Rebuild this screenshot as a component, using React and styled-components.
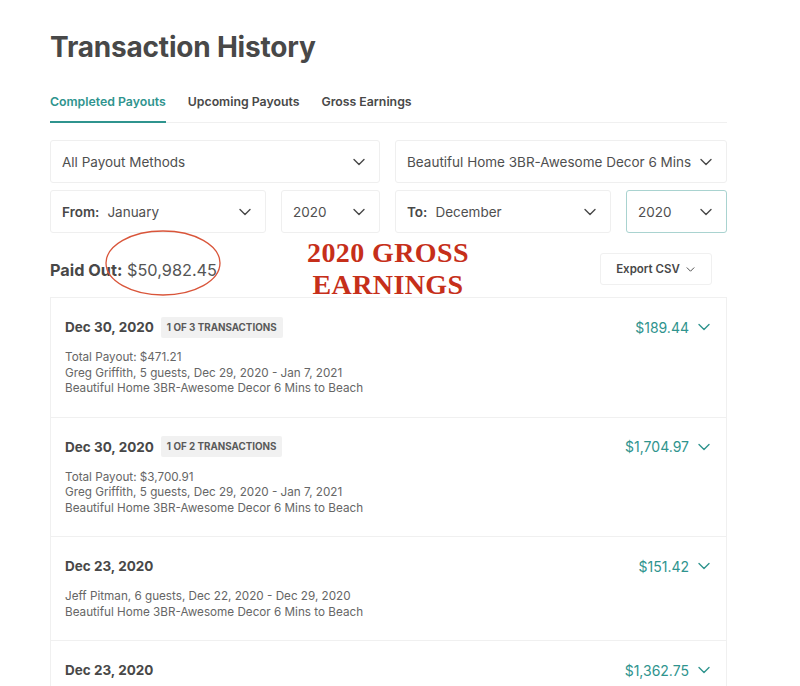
import React from 'react'
import styled, { createGlobalStyle } from 'styled-components'

const GlobalStyle = createGlobalStyle`
    body {
        margin: 0;
        background: #ffffff;
        font-family: "Inter", "Open Sans", sans-serif;
        color: #484848;
    }
`;

const TEAL = '#2f948e';

const Page = styled.div`
    width: 677px;
    padding: 27px 0 0 50px;
    position: relative;
`;

const Title = styled.h1`
    font-size: 28px;
    font-weight: 700;
    letter-spacing: -0.2px;
    color: #484848;
    margin: 0 0 27px 0;
    line-height: 40px;
`;

const Tabs = styled.div`
    display: flex;
    gap: 22px;
    border-bottom: 1px solid #f0f0f0;
    margin-bottom: 17px;
`;

const Tab = styled.div`
    font-size: 12.3px;
    font-weight: 600;
    color: ${({ $active }) => ($active ? TEAL : '#484848')};
    padding: 0 0 12px 0;
    border-bottom: 2px solid ${({ $active }) => ($active ? TEAL : 'transparent')};
    margin-bottom: -1px;
`;

const FilterGrid = styled.div`
    display: grid;
    grid-template-columns: 216px 99px 216px 101px;
    column-gap: 15px;
    row-gap: 7px;
`;

const Select = styled.div`
    grid-column: span ${({ $span }) => $span || 1};
    height: 43px;
    box-sizing: border-box;
    border: 1px solid ${({ $focused }) => ($focused ? '#a9d3d0' : '#efefef')};
    border-radius: 3px;
    display: flex;
    align-items: center;
    padding: 0 12px 0 11px;
    font-size: 13.5px;
    color: #4f4f4f;
    white-space: nowrap;
    overflow: hidden;
`;

const SelectText = styled.span`
    flex: 1;
    min-width: 0;
    overflow: hidden;
`;

const Label = styled.span`
    font-weight: 600;
    color: #484848;
    margin-right: 8px;
`;

const Chevron = ({ size = 16, color = '#484848' }) => (
    <svg width={size} height={size} viewBox="0 0 16 16" fill="none" style={{ flexShrink: 0 }}>
        <path d="M3 5.5 L8 10.5 L13 5.5" stroke={color} strokeWidth="1.4" strokeLinecap="round" strokeLinejoin="round" />
    </svg>
);

const SummaryRow = styled.div`
    display: flex;
    align-items: center;
    justify-content: space-between;
    height: 64px;
    padding-right: 15px;
`;

const PaidOut = styled.div`
    font-size: 16.3px;
    color: #555555;
    padding-top: 9px;

    b {
        font-weight: 700;
        color: #484848;
    }
`;

const ExportButton = styled.div`
    width: 112px;
    height: 32px;
    box-sizing: border-box;
    border: 1px solid #f0f0f0;
    border-radius: 3px;
    display: flex;
    align-items: center;
    justify-content: center;
    gap: 5px;
    font-size: 11.5px;
    font-weight: 600;
    color: #484848;
    margin-top: 8px;
`;

const Annotation = styled.div`
    position: absolute;
    left: 288px;
    top: 237px;
    width: 200px;
    text-align: center;
    font-family: "Liberation Serif", serif;
    font-weight: 700;
    font-size: 28px;
    line-height: 32px;
    color: #c62f1a;
    letter-spacing: 0.4px;
`;

const Circle = styled.svg`
    position: absolute;
    left: 103px;
    top: 228px;
`;

const List = styled.div`
    border: 1px solid #f0f0f0;
    border-bottom: none;
`;

const Row = styled.div`
    display: flex;
    justify-content: space-between;
    align-items: flex-start;
    padding: 19px 14px 20px 14px;
    border-bottom: 1px solid #f0f0f0;
`;

const RowMain = styled.div`
    display: flex;
    flex-direction: column;
`;

const DateLine = styled.div`
    display: flex;
    align-items: center;
    gap: 7px;
    font-size: 13.5px;
    font-weight: 700;
    color: #484848;
    height: 20px;
    margin-bottom: 13px;
`;

const Badge = styled.span`
    background: #f1f1f1;
    color: #5a5a5a;
    font-size: 9.8px;
    font-weight: 700;
    padding: 5px 6px;
    border-radius: 2px;
`;

const Detail = styled.div`
    font-size: 11.7px;
    line-height: 15.5px;
    color: #666666;
`;

const Amount = styled.div`
    display: flex;
    align-items: center;
    gap: 7px;
    font-size: 14px;
    color: ${TEAL};
    height: 20px;
`;

const rows = [
    {
        date: 'Dec 30, 2020',
        badge: '1 OF 3 TRANSACTIONS',
        amount: '$189.44',
        lines: [
            'Total Payout: $471.21',
            'Greg Griffith, 5 guests, Dec 29, 2020 - Jan 7, 2021',
            'Beautiful Home 3BR-Awesome Decor 6 Mins to Beach',
        ],
    },
    {
        date: 'Dec 30, 2020',
        badge: '1 OF 2 TRANSACTIONS',
        amount: '$1,704.97',
        lines: [
            'Total Payout: $3,700.91',
            'Greg Griffith, 5 guests, Dec 29, 2020 - Jan 7, 2021',
            'Beautiful Home 3BR-Awesome Decor 6 Mins to Beach',
        ],
    },
    {
        date: 'Dec 23, 2020',
        amount: '$151.42',
        lines: [
            'Jeff Pitman, 6 guests, Dec 22, 2020 - Dec 29, 2020',
            'Beautiful Home 3BR-Awesome Decor 6 Mins to Beach',
        ],
    },
    {
        date: 'Dec 23, 2020',
        amount: '$1,362.75',
        lines: [],
    },
];

const App = () => {
    return (
        <>
            <GlobalStyle />
            <Page>
                <Title>Transaction History</Title>
                <Tabs>
                    <Tab $active>Completed Payouts</Tab>
                    <Tab>Upcoming Payouts</Tab>
                    <Tab>Gross Earnings</Tab>
                </Tabs>

                <FilterGrid>
                    <Select $span={2}>
                        <SelectText>All Payout Methods</SelectText>
                        <Chevron />
                    </Select>
                    <Select $span={2}>
                        <SelectText>Beautiful Home 3BR-Awesome Decor 6 Mins</SelectText>
                        <Chevron />
                    </Select>
                    <Select>
                        <Label>From:</Label>
                        <SelectText>January</SelectText>
                        <Chevron />
                    </Select>
                    <Select>
                        <SelectText>2020</SelectText>
                        <Chevron />
                    </Select>
                    <Select>
                        <Label>To:</Label>
                        <SelectText>December</SelectText>
                        <Chevron />
                    </Select>
                    <Select $focused>
                        <SelectText>2020</SelectText>
                        <Chevron />
                    </Select>
                </FilterGrid>

                <SummaryRow>
                    <PaidOut>
                        <b>Paid Out:</b> $50,982.45
                    </PaidOut>
                    <ExportButton>
                        Export CSV <Chevron size={11} />
                    </ExportButton>
                </SummaryRow>

                <Circle width="120" height="70" viewBox="0 0 120 70">
                    <ellipse cx="60" cy="35" rx="57" ry="32" fill="none" stroke="#d9553a" strokeWidth="1.3" />
                </Circle>
                <Annotation>
                    2020 GROSS
                    <br />
                    EARNINGS
                </Annotation>

                <List>
                    {rows.map((row, i) => (
                        <Row key={i}>
                            <RowMain>
                                <DateLine>
                                    {row.date}
                                    {row.badge && <Badge>{row.badge}</Badge>}
                                </DateLine>
                                {row.lines.map((line) => (
                                    <Detail key={line}>{line}</Detail>
                                ))}
                            </RowMain>
                            <Amount>
                                {row.amount}
                                <Chevron color={TEAL} />
                            </Amount>
                        </Row>
                    ))}
                </List>
            </Page>
        </>
    )
}

export default App
